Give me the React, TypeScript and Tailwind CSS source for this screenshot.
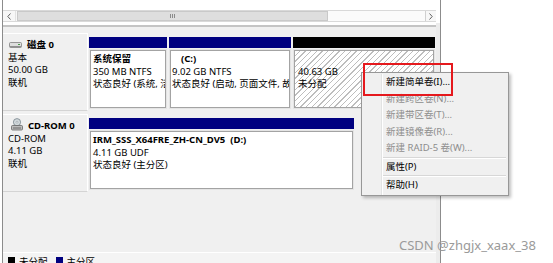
import React from "react";

function DiskIcon() {
  return (
    <svg width="13" height="8" viewBox="0 0 13 8">
      <rect x="0.5" y="1.5" width="12" height="5" rx="1" fill="#dedede" stroke="#808080" strokeWidth="0.8" />
      <rect x="1" y="5" width="11" height="1.3" fill="#8f8f8f" />
      <rect x="9" y="3" width="2" height="1" fill="#4a9a4a" />
    </svg>
  );
}

function CdIcon() {
  return (
    <svg width="12" height="13" viewBox="0 0 12 13">
      <circle cx="6" cy="4.2" r="3.6" fill="#d3dadd" stroke="#76838a" strokeWidth="0.8" />
      <circle cx="6" cy="4.2" r="1" fill="#ffffff" stroke="#76838a" strokeWidth="0.5" />
      <rect x="0.5" y="7.5" width="11" height="4.5" rx="1" fill="#bcbcbc" stroke="#666666" strokeWidth="0.8" />
      <rect x="2" y="9.5" width="8" height="1" fill="#6a6a6a" />
    </svg>
  );
}

function Chevron({ dir }: { dir: "l" | "r" }) {
  return (
    <svg width="4" height="7" viewBox="0 0 4 7">
      <path d={dir === "l" ? "M3.5 0.5 L0.8 3.5 L3.5 6.5" : "M0.5 0.5 L3.2 3.5 L0.5 6.5"} fill="none" stroke="#606060" strokeWidth="1" />
    </svg>
  );
}

export default function App() {
  return (
    <div className="relative w-[553px] h-[263px] overflow-hidden bg-white text-black font-['Noto_Sans','Noto_Sans_CJK_SC',sans-serif] text-[9.5px] leading-[12.5px]">
      <div className="flex h-full w-[441px]">
        <div className="w-[2px] bg-white" />
        <div className="w-[1px] bg-[#8c8c8c]" />
        {/* content */}
        <div className="flex w-[433px] flex-col">
          <div className="h-[10px] bg-white" />
          {/* horizontal scrollbar */}
          <div className="flex h-[12px] border-y border-[#d9d9d9] bg-[#f7f7f7]">
            <div className="flex w-[13px] items-center justify-center border-r border-[#e2e2e2] bg-[#f7f7f7]">
              <Chevron dir="l" />
            </div>
            <div className="ml-[1px] flex w-[311px] items-center justify-center border border-[#c9c9c9] bg-[#dedede]">
              <div className="flex gap-[1px]">
                <div className="h-[4px] w-[1px] bg-[#8a8a8a]" />
                <div className="h-[4px] w-[1px] bg-[#8a8a8a]" />
                <div className="h-[4px] w-[1px] bg-[#8a8a8a]" />
              </div>
            </div>
            <div className="flex-1 bg-[#fbfbfb]" />
            <div className="flex w-[11px] items-center justify-center border-l border-[#d0d0d0] bg-[#f7f7f7]">
              <Chevron dir="r" />
            </div>
          </div>
          <div className="h-[3px] bg-white" />
          <div className="h-[2px] bg-[#c4c4c4]" />
          {/* graphical view */}
          <div className="flex flex-1 flex-col bg-[#f0f0f0] pt-[6px]">
            {/* Disk 0 */}
            <div className="flex h-[78px]">
              <div className="flex w-[85px] flex-col border-t border-r border-white border-b-[#d4d4d4] border-b pl-[5px] pt-[5px]">
                <div className="flex items-center gap-[5px] font-bold">
                  <span className="ml-[1px] flex"><DiskIcon /></span>
                  <span>磁盘 0</span>
                </div>
                <div>基本</div>
                <div>50.00 GB</div>
                <div>联机</div>
              </div>
              <div className="ml-[1px] flex w-[346px] gap-[2px] pt-[4px] pb-[2px]">
                <div className="flex w-[78px] flex-col">
                  <div className="h-[11px] bg-[#000080]" />
                  <div className="flex-1 border border-[#e4e4e4] mt-[1px]">
                    <div className="h-full overflow-hidden whitespace-nowrap border border-[#a3a3a3] bg-white pl-[2px] pt-[2px]">
                      <div className="font-bold">系统保留</div>
                      <div>350 MB NTFS</div>
                      <div>状态良好 (系统, 活动, 主分区)</div>
                    </div>
                  </div>
                </div>
                <div className="flex w-[122px] flex-col">
                  <div className="h-[11px] bg-[#000080]" />
                  <div className="flex-1 border border-[#e4e4e4] mt-[1px]">
                    <div className="h-full overflow-hidden whitespace-nowrap border border-[#a3a3a3] bg-white pl-[1px] pt-[2px]">
                      <div className="pl-[9px] font-bold">(C:)</div>
                      <div>9.02 GB NTFS</div>
                      <div>状态良好 (启动, 页面文件, 故障转储, 主分区)</div>
                    </div>
                  </div>
                </div>
                <div className="flex w-[144px] flex-col">
                  <div className="h-[11px] bg-black" />
                  <div className="flex-1 border border-[#e4e4e4] mt-[1px]">
                    <div className="h-full overflow-hidden whitespace-nowrap border border-[#a3a3a3] bg-white bg-[repeating-linear-gradient(135deg,#ffffff_0px,#ffffff_3px,#bdbdbd_3px,#bdbdbd_4px)] pl-[3px] pt-[2px]">
                      <div>&nbsp;</div>
                      <div>40.63 GB</div>
                      <div>未分配</div>
                    </div>
                  </div>
                </div>
              </div>
            </div>
            <div className="h-[3px]" />
            {/* CD-ROM 0 */}
            <div className="flex h-[78px]">
              <div className="flex w-[85px] flex-col border-t border-r border-white border-b-[#d4d4d4] border-b pl-[5px] pt-[5px]">
                <div className="flex items-center gap-[5px] font-bold">
                  <span className="ml-[3px] -mt-[3px] flex"><CdIcon /></span>
                  <span>CD-ROM 0</span>
                </div>
                <div>CD-ROM</div>
                <div>4.11 GB</div>
                <div>联机</div>
              </div>
              <div className="ml-[1px] flex w-[346px] pt-[4px] pb-[2px]">
                <div className="flex w-[265px] flex-col">
                  <div className="h-[11px] bg-[#000080]" />
                  <div className="flex-1 border border-[#e4e4e4] mt-[1px]">
                    <div className="h-full overflow-hidden whitespace-nowrap border border-[#a3a3a3] bg-white pl-[2px] pt-[2px]">
                      <div className="font-bold">IRM_SSS_X64FRE_ZH-CN_DV5&nbsp;&nbsp;(D:)</div>
                      <div>4.11 GB UDF</div>
                      <div>状态良好 (主分区)</div>
                    </div>
                  </div>
                </div>
              </div>
            </div>
            <div className="flex-1" />
            {/* legend */}
            <div className="flex h-[11px] items-start gap-[4px] border-t border-white bg-[#f4f4f4] pl-[5px] pt-[3px]">
              <div className="mt-[1px] h-[7px] w-[7px] bg-black" />
              <span className="mr-[4px]">未分配</span>
              <div className="mt-[1px] h-[7px] w-[7px] bg-[#000080]" />
              <span>主分区</span>
            </div>
          </div>
        </div>
        {/* right frame */}
        <div className="flex w-[4px] flex-col">
          <div className="h-[23px] bg-white" />
          <div className="flex-1 bg-[#ececec]" />
        </div>
        <div className="w-[1px] bg-[#8c8c8c]" />
      </div>

      {/* context menu */}
      <div className="absolute left-[361px] top-[72px] flex h-[124px] w-[148px] border border-[#979797] bg-[#f0f0f0] shadow-[2px_2px_3px_rgba(0,0,0,0.25)] pt-[1px]">
        <div className="w-[19px]" />
        <div className="w-[1px] bg-[#e2e3e3]" />
        <div className="w-[1px] bg-white" />
        <div className="flex flex-1 flex-col pl-[3px] pr-[2px]">
          <div className="flex h-[16.5px] items-center">新建简单卷(I)...</div>
          <div className="flex h-[16.5px] items-center text-[#8d8d8d]">新建跨区卷(N)...</div>
          <div className="flex h-[16.5px] items-center text-[#8d8d8d]">新建带区卷(T)...</div>
          <div className="flex h-[16.5px] items-center text-[#8d8d8d]">新建镜像卷(R)...</div>
          <div className="flex h-[16.5px] items-center text-[#8d8d8d]">新建 RAID-5 卷(W)...</div>
          <div className="-ml-[3px] flex h-[2px] flex-col justify-center">
            <div className="h-[1px] bg-[#d7d7d7]" />
            <div className="h-[1px] bg-white" />
          </div>
          <div className="flex h-[16.5px] items-center">属性(P)</div>
          <div className="-ml-[3px] flex h-[2px] flex-col justify-center">
            <div className="h-[1px] bg-[#d7d7d7]" />
            <div className="h-[1px] bg-white" />
          </div>
          <div className="flex h-[16.5px] items-center">帮助(H)</div>
        </div>
      </div>

      {/* red highlight */}
      <div className="absolute left-[363px] top-[63px] h-[33px] w-[90px] border-2 border-[#e5191d]" />

      {/* watermark */}
      <div className="absolute left-[399px] top-[236px] text-[13px] leading-[18px] text-[#9a9a9a] font-['Noto_Sans',sans-serif]">
        CSDN @zhgjx_xaax_38
      </div>
    </div>
  );
}
